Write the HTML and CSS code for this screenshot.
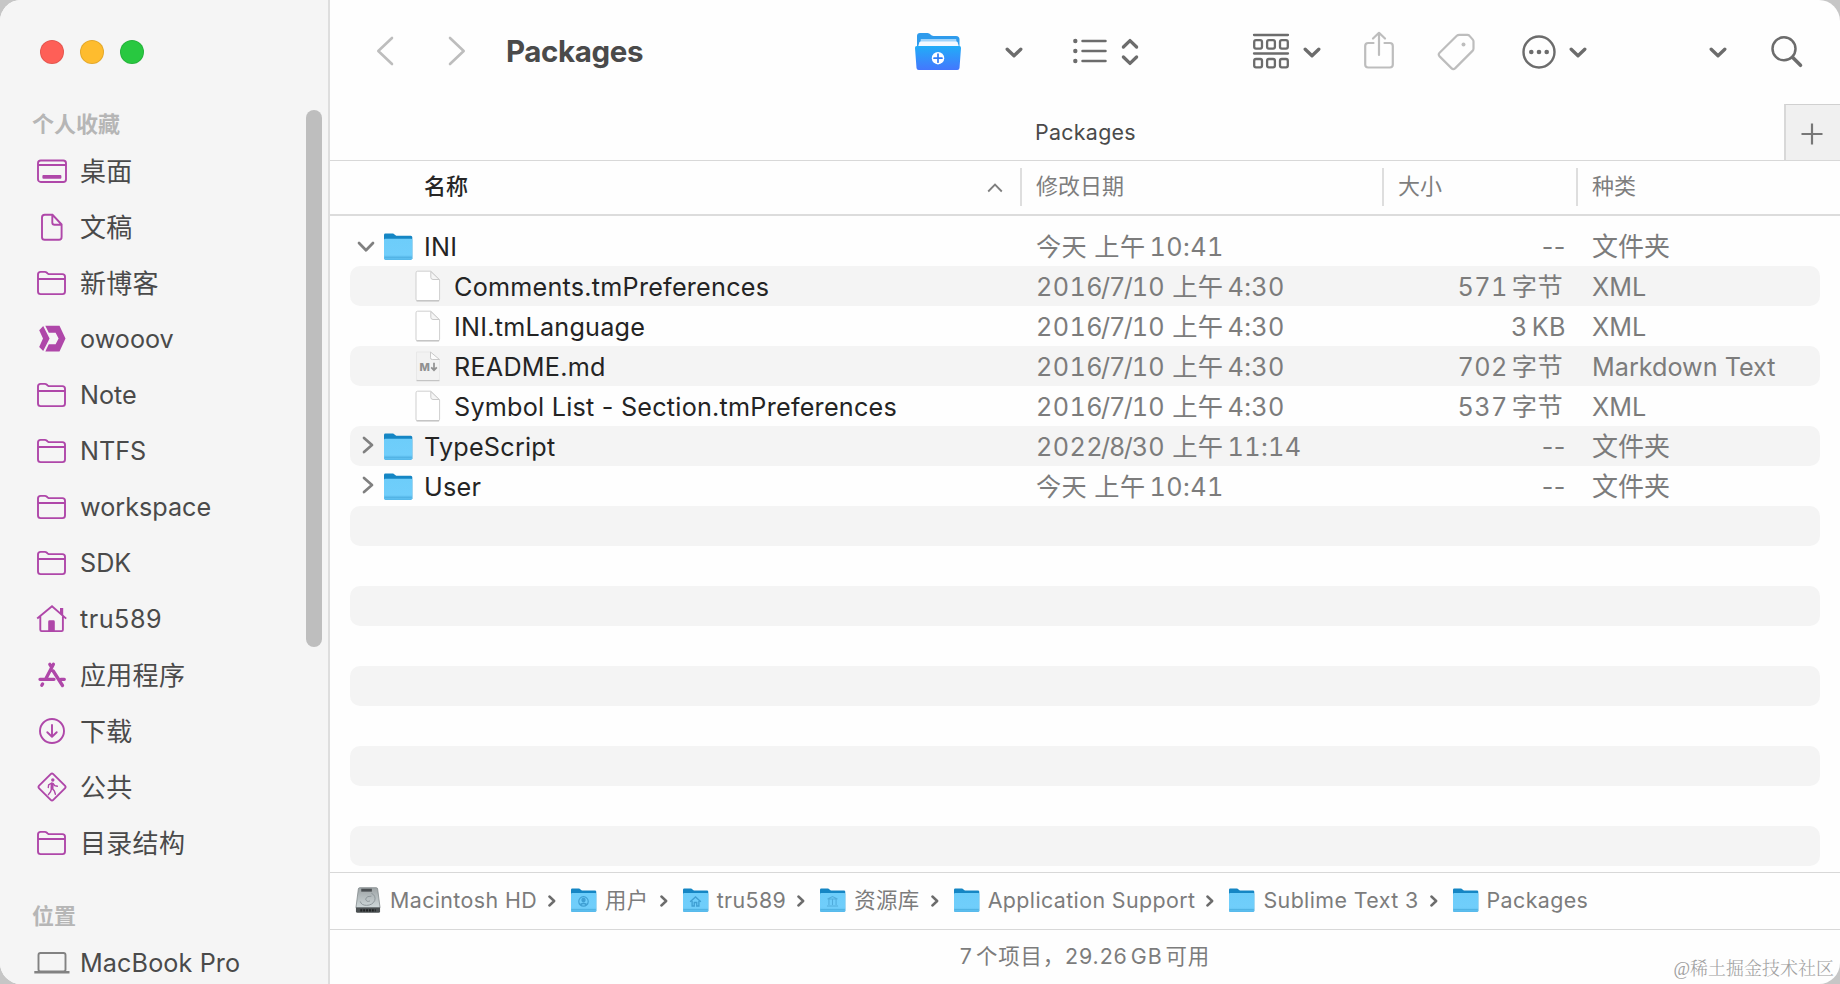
FILE: index.html
```
<!DOCTYPE html>
<html lang="zh-CN">
<head>
    <meta charset="UTF-8">
    <meta name="viewport" content="width=device-width, initial-scale=1.0">
    <title>Packages</title>
    <link rel="stylesheet" href="styles.css">
</head>
<body>
    <svg class="sprite" aria-hidden="true">
        <defs>
            <linearGradient id="front" x1="0" y1="0" x2="0" y2="1">
                <stop offset="0" stop-color="#6dcdfa"/>
                <stop offset="0.75" stop-color="#70cefb"/>
                <stop offset="1" stop-color="#55b8ea"/>
            </linearGradient>
            <linearGradient id="disk" x1="0" y1="0" x2="0" y2="1">
                <stop offset="0" stop-color="#9da3a5"/>
                <stop offset="1" stop-color="#cfd8da"/>
            </linearGradient>
            <linearGradient id="plusfolder" x1="0" y1="0" x2="0" y2="1">
                <stop offset="0" stop-color="#21adf8"/>
                <stop offset="1" stop-color="#4477fd"/>
            </linearGradient>
        </defs>
        <symbol id="i-folder" viewBox="0 0 36 30">
            <path d="M4 23.5V6.5q0-2.600 2.600-2.600h4.200q1.200 0 2.100.8l.8.700q.9.700 2.100.7H28.400q2.600 0 2.600 2.600v14.800q0 2.600-2.600 2.600H6.600Q4 26.100 4 23.500zM4 11h27"/>
        </symbol>
        <symbol id="i-desktop" viewBox="0 0 36 30">
            <rect x="4" y="4.500" width="28" height="21.500" rx="2.800"/>
            <path d="M4 9h28"/>
            <rect x="8.400" y="18.900" width="19" height="3.800" rx="1" fill="currentColor" stroke="none"/>
        </symbol>
        <symbol id="i-doc" viewBox="0 0 36 30">
            <path d="M18.500 2.800H10.800Q8 2.800 8 5.600v19.600Q8 27.800 10.800 27.800h14.200q2.600 0 2.600-2.800V12.500zM18.300 3v7.500q0 2.300 2.300 2.300h7"/>
        </symbol>
        <symbol id="i-owo" viewBox="0 0 36 30">
            <path fill="currentColor" stroke="none" d="M11.300 1.700h14.200L31.500 14.500l-6 12.900H11.300l3.500-7.200h6.800l3-5.700-3-5.700h-6.800z"/>
            <path fill="currentColor" stroke="none" d="M9.200 2 15.600 14.500 9.200 27.100 5.200 22.900 9 14.500 5.200 6.300z"/>
        </symbol>
        <symbol id="i-home" viewBox="0 0 36 30">
            <path d="M3.200 14.600 18 2.200l14.200 12.400M6.300 12.500v13.300q0 1.300 1.300 1.300h20q1.300 0 1.300-1.300V12.500"/>
            <path fill="currentColor" stroke="none" d="M26 4h3.200v8.300L26 9.500zM14.200 27V17.700q0-1.400 1.400-1.400h3.800q1.400 0 1.400 1.400V27z"/>
        </symbol>
        <symbol id="i-apps" viewBox="0 0 36 30">
            <path stroke-width="3.300" stroke-linecap="round" d="M15.800 4.300l1.500 2.300M19.400 4.300 12 18.500M19.200 11 28.500 25.500M8.600 23.900l-.8 1.400M6 19.300h14M26.800 19.300h3.500"/>
        </symbol>
        <symbol id="i-down" viewBox="0 0 36 30">
            <circle cx="18" cy="15" r="12"/>
            <path stroke-linecap="round" stroke-linejoin="round" d="M18 9v11.500M13.300 16.200l4.700 4.500 4.700-4.500"/>
        </symbol>
        <symbol id="i-walk" viewBox="0 0 36 30">
            <path stroke-linejoin="round" d="M16.700 2.100 5.100 13.700q-1.300 1.300 0 2.600L16.700 27.900q1.300 1.300 2.600 0L30.900 16.300q1.300-1.300 0-2.600L19.300 2.100q-1.300-1.300-2.600 0z"/>
            <circle cx="18.800" cy="8" r="1.700" fill="currentColor" stroke="none"/>
            <path stroke-width="3" stroke-linecap="round" d="M18.200 12l-.2 4"/>
            <path stroke-width="1.400" stroke-linecap="round" d="M17.600 11.200l-3 1.800-.3 2.500M19 11.500l1.800 2.200 2.600.5M17.600 16.500l-1 3.200-2.200 3M18.400 16.500l2 2.600 1 3.200"/>
        </symbol>
        <symbol id="i-laptop" viewBox="0 0 36 30">
            <rect x="4.500" y="5" width="27" height="18.500" rx="2"/>
            <path d="M.3 24.300h35.200" stroke-width="2.600"/>
        </symbol>
        <symbol id="chev-down" viewBox="0 0 18 12">
            <path d="M2.200 2.200 9 8.800l6.800-6.600" fill="none" stroke="currentColor" stroke-width="3.300" stroke-linecap="round" stroke-linejoin="round"/>
        </symbol>
        <symbol id="chev-open" viewBox="0 0 18 12">
            <path d="M2 2 9 9.300 16 2" fill="none" stroke="currentColor" stroke-width="2.700" stroke-linecap="round" stroke-linejoin="round"/>
        </symbol>
        <symbol id="chev-closed" viewBox="0 0 12 18">
            <path d="M2 2l8 7-8 7" fill="none" stroke="currentColor" stroke-width="2.700" stroke-linecap="round" stroke-linejoin="round"/>
        </symbol>
        <symbol id="chev-path" viewBox="0 0 8 12">
            <path d="M1.400 1.500 6.200 6l-4.800 4.500" fill="none" stroke="currentColor" stroke-width="2.400" stroke-linecap="round" stroke-linejoin="round"/>
        </symbol>
        <symbol id="folder" viewBox="0 0 30 28">
            <path fill="#1586c4" d="M1 26V2q0-1.400 1.400-1.400h7.800l3 2.200h14.600q1.500 0 1.500 1.500V26z"/>
            <path fill="url(#front)" d="M1 7q0-1.300 1.300-1.300H28q1.300 0 1.300 1.300v18.500q0 1.400-1.400 1.400H2.400Q1 26.900 1 25.500z"/>
            <path stroke="#4dafe0" stroke-width="1" d="M1.500 24.200h27.300"/>
        </symbol>
        <symbol id="file" viewBox="0 0 26 32">
            <path d="M1 2.800Q1 1.200 2.600 1.200h13.200L24.600 10v19.200q0 1.500-1.500 1.500H2.500q-1.500 0-1.500-1.500z" fill="#fff" stroke="#cfcfcf"/>
            <path d="M1.500 30.900h22.600" stroke="#b8b8b8"/>
            <path d="M15.800 1.500v5.800q0 2.200 2.200 2.200h6.300z" fill="#f5f5f5" stroke="#cacaca"/>
        </symbol>
    </svg>

    <div class="window">
        <aside class="sidebar">
            <div class="lights">
                <span class="light red"></span>
                <span class="light yellow"></span>
                <span class="light green"></span>
            </div>
            <h2 class="group">个人收藏</h2>
            <ul class="places">
                <li class="cjk"><svg><use href="#i-desktop"/></svg>桌面</li>
                <li class="cjk"><svg><use href="#i-doc"/></svg>文稿</li>
                <li class="cjk"><svg><use href="#i-folder"/></svg>新博客</li>
                <li><svg><use href="#i-owo"/></svg>owooov</li>
                <li><svg><use href="#i-folder"/></svg>Note</li>
                <li><svg><use href="#i-folder"/></svg>NTFS</li>
                <li><svg><use href="#i-folder"/></svg>workspace</li>
                <li><svg><use href="#i-folder"/></svg>SDK</li>
                <li class="digits"><svg><use href="#i-home"/></svg>tru589</li>
                <li class="cjk"><svg><use href="#i-apps"/></svg>应用程序</li>
                <li class="cjk"><svg><use href="#i-down"/></svg>下载</li>
                <li class="cjk"><svg><use href="#i-walk"/></svg>公共</li>
                <li class="cjk"><svg><use href="#i-folder"/></svg>目录结构</li>
            </ul>
            <h2 class="group second">位置</h2>
            <ul class="places devices">
                <li><svg><use href="#i-laptop"/></svg>MacBook Pro</li>
            </ul>
            <div class="scrollbar"></div>
        </aside>

        <main class="content">
            <header class="toolbar">
                <svg class="nav-back" width="18" height="30" viewBox="0 0 18 30"><path d="M16 2 2.300 15 16 28"/></svg>
                <svg class="nav-next" width="18" height="30" viewBox="0 0 18 30"><path d="M2 2l13.700 13L2 28"/></svg>
                <h1 class="title">Packages</h1>
                <svg class="new-folder" width="48" height="38" viewBox="0 0 48 38">
                    <path fill="#2e9bec" d="M3 16V3q0-3 3-3h7.500q2 0 3 1.600Q17.500 3 19.500 3H42q3.500 0 3.500 3.500V16z"/>
                    <path fill="#9fd4fb" d="M6 14l.8-8h35.400l.8 8z"/>
                    <path fill="#f3f9ff" d="M4 14l1.300-4.500q.4-1 1.500-1h35.500q1 0 1.400 1L45 14z"/>
                    <path fill="url(#plusfolder)" d="M1 15q-.2-2 1.800-2h42.400q2 0 1.800 2l-1.500 20q-.2 2-2.200 2H4.700q-2 0-2.200-2z"/>
                    <circle cx="24" cy="25.200" r="6.200" fill="#fff"/>
                    <path d="M24 21.200v8M20 25.200h8" stroke="#327cf5" stroke-width="1.700"/>
                </svg>
                <svg class="chev c1"><use href="#chev-down"/></svg>
                <svg class="view-list" width="34" height="26" viewBox="0 0 34 26">
                    <g fill="#6c6c6c"><circle cx="2.300" cy="3" r="2.200"/><circle cx="2.300" cy="13" r="2.200"/><circle cx="2.300" cy="23" r="2.200"/></g>
                    <path d="M9.500 3h23M9.500 13h23M9.500 23h23" stroke="#6c6c6c" stroke-width="2.500" stroke-linecap="round"/>
                </svg>
                <svg class="updown" width="18" height="28" viewBox="0 0 18 28"><path d="M2.400 9 9 2.600 15.600 9M2.400 19 9 25.400 15.600 19"/></svg>
                <svg class="group-by" width="38" height="36" viewBox="0 0 38 36">
                    <g fill="none" stroke="#6c6c6c" stroke-width="2.300">
                        <path d="M2 2h34M2 20.500h34"/>
                        <rect x="2.200" y="7.200" width="7.800" height="8.400" rx="1.800"/><rect x="15.100" y="7.200" width="7.800" height="8.400" rx="1.800"/><rect x="28" y="7.200" width="7.800" height="8.400" rx="1.800"/>
                        <rect x="2.200" y="26" width="7.800" height="8.400" rx="1.800"/><rect x="15.100" y="26" width="7.800" height="8.400" rx="1.800"/><rect x="28" y="26" width="7.800" height="8.400" rx="1.800"/>
                    </g>
                </svg>
                <svg class="chev c2"><use href="#chev-down"/></svg>
                <svg class="share" width="32" height="38" viewBox="0 0 32 38">
                    <path d="M10.500 12H5.200q-3 0-3 3v18.500q0 3 3 3h21.600q3 0 3-3V15q0-3-3-3h-5.300M16 24V2M10 7.500 16 1.800l6 5.700"/>
                </svg>
                <svg class="tag" width="38" height="38" viewBox="0 0 38 38">
                    <path d="M2.600 19.800 19.800 2.800q1-1 2.500-1H30.500q1 0 1.800.8l3.500 4q.7.800.7 1.900v7q0 1.400-1 2.400L18.300 35.100q-2 1.900-3.900 0L2.600 23.400q-1.700-1.800 0-3.600z"/>
                    <circle cx="26.500" cy="11.500" r="2" fill="#bdbdbd" stroke="none"/>
                </svg>
                <svg class="more" width="36" height="36" viewBox="0 0 36 36">
                    <circle cx="18" cy="18" r="15.500" fill="none" stroke="#6c6c6c" stroke-width="2.400"/>
                    <g fill="#6c6c6c"><circle cx="10.300" cy="18" r="2.300"/><circle cx="18" cy="18" r="2.300"/><circle cx="25.700" cy="18" r="2.300"/></g>
                </svg>
                <svg class="chev c3"><use href="#chev-down"/></svg>
                <svg class="chev c4"><use href="#chev-down"/></svg>
                <svg class="search" width="34" height="34" viewBox="0 0 34 34">
                    <circle cx="14" cy="13.800" r="11.500" stroke-width="2.500"/>
                    <path d="M22.500 22.300 30.500 30.300" stroke-width="3.600"/>
                </svg>
            </header>

            <div class="tabs">
                <div class="tab">Packages</div>
                <div class="tab-add"><svg width="22" height="22" viewBox="0 0 22 22"><path d="M11 .5v21M.5 11h21"/></svg></div>
            </div>

            <div class="columns">
                <div class="col-name">名称<svg width="16" height="10" viewBox="0 0 16 10"><path d="M1.200 8.500 8 1.500l6.800 7"/></svg></div>
                <div>修改日期</div>
                <div>大小</div>
                <div>种类</div>
            </div>

            <div class="rows">
                <div class="row">
                    <div class="name"><svg class="open"><use href="#chev-open"/></svg><svg class="folder"><use href="#folder"/></svg>INI</div>
                    <div class="date">今天 上午<i></i>10:41</div><div class="size none">--</div><div class="kind cjk">文件夹</div>
                </div>
                <div class="row">
                    <div class="name child"><svg class="file"><use href="#file"/></svg>Comments.tmPreferences</div>
                    <div class="date">2016<span>/</span>7<span>/</span>10 上午<i></i>4:30</div><div class="size unit">571<i></i>字节</div><div class="kind">XML</div>
                </div>
                <div class="row">
                    <div class="name child"><svg class="file"><use href="#file"/></svg>INI.tmLanguage</div>
                    <div class="date">2016<span>/</span>7<span>/</span>10 上午<i></i>4:30</div><div class="size">3<i></i>KB</div><div class="kind">XML</div>
                </div>
                <div class="row">
                    <div class="name child">
                        <svg class="file" viewBox="0 0 26 32">
                            <path d="M1.500 2v27q0 1.500 1.500 1.500h20q1.500 0 1.500-1.500V9.500h-7.200q-1.800 0-1.800-1.800V2z" fill="#f2f2f2" stroke="#e8e8e8"/>
                            <path d="M15.500 2v5.700q0 1.800 1.800 1.800h7.200z" fill="#fcfcfc" stroke="#c9c9c9"/>
                            <path d="M1.500 30.700h23" stroke="#bcbcbc"/>
                            <text x="4.500" y="21" class="md">M</text>
                            <path d="M19 12.800v7M16.200 17.300l2.800 2.900 2.800-2.900" fill="none" stroke="#909090" stroke-width="1.700"/>
                        </svg>README.md</div>
                    <div class="date">2016<span>/</span>7<span>/</span>10 上午<i></i>4:30</div><div class="size unit">702<i></i>字节</div><div class="kind">Markdown Text</div>
                </div>
                <div class="row">
                    <div class="name child"><svg class="file"><use href="#file"/></svg>Symbol List - Section.tmPreferences</div>
                    <div class="date">2016<span>/</span>7<span>/</span>10 上午<i></i>4:30</div><div class="size unit">537<i></i>字节</div><div class="kind">XML</div>
                </div>
                <div class="row">
                    <div class="name"><svg class="closed"><use href="#chev-closed"/></svg><svg class="folder"><use href="#folder"/></svg>TypeScript</div>
                    <div class="date">2022<span>/</span>8<span>/</span>30 上午<i></i>11:14</div><div class="size none">--</div><div class="kind cjk">文件夹</div>
                </div>
                <div class="row">
                    <div class="name"><svg class="closed"><use href="#chev-closed"/></svg><svg class="folder"><use href="#folder"/></svg>User</div>
                    <div class="date">今天 上午<i></i>10:41</div><div class="size none">--</div><div class="kind cjk">文件夹</div>
                </div>
                <div class="row"></div>
                <div class="row"></div>
                <div class="row"></div>
                <div class="row"></div>
                <div class="row"></div>
                <div class="row"></div>
                <div class="row"></div>
                <div class="row"></div>
                <div class="row"></div>
            </div>

            <nav class="path">
                <svg class="hd" viewBox="0 0 26 28">
                    <path d="M3 2q.2-1.300 1.500-1.300h17Q22.800.7 23 2l2.500 19.500H.5z" fill="url(#disk)" stroke="#80878a" stroke-width=".8"/>
                    <path d="M.5 21.300h25v3.900q0 1.600-1.600 1.600H2.100Q.5 26.800.5 25.200z" fill="#4b5052"/>
                    <path d="M5 24.200h16" stroke="#1e2122" stroke-width="2.400" stroke-dasharray="2 1"/>
                    <path d="M6 3.300h11" stroke="#4a4f52" stroke-width="3"/>
                    <path d="M16.500 6.500q5 2.500 3.500 7.500-2.500 5-8.500 5-5.500 0-6.500-4M16.500 9.500q-5-.5-6 3 1 3.500 4.500 2" fill="none" stroke="#8b9498" stroke-width="1"/>
                </svg>
                <span>Macintosh HD</span><svg class="sep"><use href="#chev-path"/></svg>
                <svg class="pf" viewBox="0 0 30 28"><use href="#folder"/><g fill="none" stroke="#3f9fd3" stroke-width="1.300"><circle cx="15" cy="15" r="5.300"/><circle cx="15" cy="13.500" r="1.800" fill="#3f9fd3"/><path d="M11.500 18.800q3.500-3 7 0" stroke-width="2"/></g></svg>
                <span class="cjk">用户</span><svg class="sep"><use href="#chev-path"/></svg>
                <svg class="pf" viewBox="0 0 30 28"><use href="#folder"/><path d="M9 15.500 15 10l6 5.500M11.200 14.500v5.700h2.400v-4h2.800v4h2.400v-5.700" fill="none" stroke="#3f9fd3" stroke-width="1.500"/></svg>
                <span>tru589</span><svg class="sep"><use href="#chev-path"/></svg>
                <svg class="pf" viewBox="0 0 30 28"><use href="#folder"/><path d="M9.500 12.300 15 9.500l5.500 2.800zM11 13v6M15 13v6M19 13v6M8.800 20.200h12.400" fill="none" stroke="#50acdc" stroke-width="1.200"/></svg>
                <span class="cjk">资源库</span><svg class="sep"><use href="#chev-path"/></svg>
                <svg class="pf"><use href="#folder"/></svg>
                <span>Application Support</span><svg class="sep"><use href="#chev-path"/></svg>
                <svg class="pf"><use href="#folder"/></svg>
                <span>Sublime Text 3</span><svg class="sep"><use href="#chev-path"/></svg>
                <svg class="pf"><use href="#folder"/></svg>
                <span>Packages</span>
            </nav>

            <footer class="status">7<i></i>个项目，29.26<i></i>GB<i></i>可用</footer>
        </main>
        <div class="watermark">@稀土掘金技术社区</div>
    </div>
</body>
</html>
```
FILE: styles.css
```
* {
    box-sizing: border-box;
}
body {
    margin: 0;
    background-color: #c6c6c6;
    font-family: Inter, "Noto Sans CJK SC", sans-serif;
    color: #4a4a4a;
}
svg {
    flex: none;
    display: block;
}
h1, h2, ul {
    margin: 0;
    padding: 0;
    list-style: none;
}
.sprite {
    position: absolute;
    width: 0;
    height: 0;
}
.window {
    position: relative;
    display: flex;
    width: 1840px;
    height: 984px;
    border-radius: 21px;
    overflow: hidden;
    background-color: #fefefe;
}

/* Sidebar */
.sidebar {
    position: relative;
    flex: none;
    width: 330px;
    height: 984px;
    overflow: hidden;
    background-color: #f5f5f5;
    border-right: 2px solid #dedede;
}
.lights {
    display: flex;
    gap: 16px;
    height: 105px;
    padding: 40px 0 0 40px;
}
.light {
    width: 24px;
    height: 24px;
    border-radius: 50%;
    border: 1px solid rgba(0, 0, 0, 0.1);
}
.red { background-color: #fe5f57; }
.yellow { background-color: #febc2e; }
.green { background-color: #28c840; }
.group {
    height: 38px;
    line-height: 38px;
    padding-left: 32px;
    font-size: 22px;
    font-weight: 700;
    color: #b6b6b6;
}
.group.second {
    margin-top: 26px;
}
.places li {
    display: flex;
    align-items: center;
    gap: 10px;
    height: 56px;
    padding-left: 34px;
    font-size: 25.2px;
    white-space: nowrap;
}
.places li.digits {
    letter-spacing: 0.5px;
}
/* CJK glyphs sit lower in their line box than latin ones */
.places li.cjk {
    padding-bottom: 4px;
    font-size: 26px;
    letter-spacing: 0.3px;
}
.places svg {
    width: 36px;
    height: 30px;
    color: #af47a9;
    fill: none;
    stroke: currentColor;
    stroke-width: 1.9;
}
.places .cjk svg {
    margin-top: 3px;
}
.places.devices li {
    letter-spacing: 0.1px;
}
.places.devices svg {
    color: #828282;
}
.scrollbar {
    position: absolute;
    right: 6px;
    top: 110px;
    width: 16px;
    height: 537px;
    border-radius: 8px;
    background-color: #bebebe;
}

/* Toolbar */
.content {
    flex: 1;
    display: flex;
    flex-direction: column;
    min-width: 0;
}
.toolbar {
    display: flex;
    align-items: center;
    height: 104px;
    padding-left: 46px;
}
.toolbar svg {
    stroke-linecap: round;
    stroke-linejoin: round;
}
.nav-back, .nav-next, .updown, .share, .tag, .search {
    fill: none;
    stroke: #bdbdbd;
    stroke-width: 2.6;
}
.nav-back, .nav-next {
    margin-top: -2px;
}
.updown, .search {
    stroke: #6c6c6c;
}
.updown {
    stroke-width: 3.3;
    margin-left: 14px;
}
.nav-next {
    margin-left: 54px;
}
.title {
    width: 408px;
    margin: -2px 0 0 40px;
    font-size: 29.5px;
    font-weight: 700;
    letter-spacing: -0.4px;
}
.chev {
    width: 18px;
    height: 12px;
    color: #6c6c6c;
    margin-top: 1px;
}
.c1 { margin-left: 43px; }
.c2 { margin-left: 13px; }
.c3 { margin-left: 12px; }
.c4 { margin-left: 122px; }
.view-list { margin-left: 50px; margin-top: -2px; }
.group-by { margin-left: 113px; margin-top: -2px; }
.share { margin-left: 42px; margin-top: -5px; stroke-width: 2.2; }
.tag { margin-left: 42px; stroke-width: 2.2; }
.more { margin-left: 46px; margin-top: -1px; }
.search { margin-left: 43px; }

/* Tabs */
.tabs {
    display: flex;
    height: 57px;
    border-bottom: 1px solid #d8d8d8;
}
.tab {
    flex: 1;
    padding-left: 57px;
    line-height: 57px;
    text-align: center;
    font-size: 21.4px;
    letter-spacing: 0.3px;
}
.tab-add {
    display: flex;
    align-items: center;
    justify-content: center;
    width: 56px;
    padding: 2px 2px 0 0;
    background-color: #f0f0f0;
    border-left: 2px solid #d8d8d8;
    border-top: 1px solid #d0d0d0;
}
.tab-add path {
    stroke: #777;
    stroke-width: 2.2;
}

/* File list */
.columns, .row {
    display: grid;
    grid-template-columns: 670px 362px 194px 1fr;
    align-items: center;
}
.columns {
    height: 55px;
    padding: 7px 0 9px 20px;
    border-bottom: 2px solid #dcdcdc;
    font-size: 22px;
    color: #7e7e7e;
}
.columns > div {
    height: 38px;
    line-height: 36px;
    padding-left: 14px;
    border-left: 2px solid #dedede;
}
.columns .col-name {
    display: flex;
    justify-content: space-between;
    align-items: center;
    padding: 0 17px 2px 74px;
    border-left: 0;
    color: #262626;
    font-weight: 500;
}
.col-name svg {
    margin-top: 4px;
    fill: none;
    stroke: #7e7e7e;
    stroke-width: 1.8;
}
.rows {
    padding: 10px 20px 6px;
}
.row {
    height: 40px;
    border-radius: 10px;
    font-size: 25.2px;
    line-height: 42px;
    white-space: nowrap;
    color: #7c7c7c;
}
.row:nth-child(even) {
    background-color: #f4f4f4;
}
.name {
    display: flex;
    align-items: center;
    height: 42px;
    padding-left: 7px;
    letter-spacing: 0.23px;
    color: #242424;
}
.name.child {
    padding-left: 65px;
}
.open {
    width: 18px;
    height: 12px;
    margin-right: 8px;
    color: #808080;
}
.closed {
    width: 12px;
    height: 18px;
    margin: 0 9px 4px 5px;
    color: #808080;
}
.folder {
    width: 30px;
    height: 28px;
    margin-right: 11px;
}
.file {
    width: 26px;
    height: 32px;
    margin: 0 13px 2px 0;
}
.md {
    font-size: 11px;
    font-weight: 800;
    letter-spacing: 0;
    fill: #909090;
}
.date, .kind {
    padding-left: 16px;
}
.date, .size {
    letter-spacing: 0.4px;
    font-variant-numeric: tabular-nums;
}
/* keep the slashes narrow next to tabular digits */
.date span {
    margin: 0 -1.5px 0 -2px;
}
.kind.cjk {
    font-size: 26px;
}
.size {
    text-align: right;
    padding-right: 10px;
}
.size.unit {
    padding-right: 13px;
}
.size.none {
    font-variant-numeric: normal;
    letter-spacing: 0.6px;
}
/* thin gap between digits and units */
i {
    display: inline-block;
    width: 4px;
}

/* Path bar and status bar */
.path {
    display: flex;
    align-items: center;
    height: 58px;
    padding-left: 25px;
    border-top: 1px solid #d8d8d8;
    border-bottom: 1px solid #d8d8d8;
    font-size: 21.4px;
    letter-spacing: 0.4px;
    color: #7c7c7c;
    white-space: nowrap;
}
.path span {
    margin-top: -2px;
}
.path span.cjk {
    margin-top: -5px;
}
.hd {
    width: 26px;
    height: 27px;
    margin: 0 9px 2px 0;
}
.pf {
    width: 27px;
    height: 25px;
    margin: 0 8px 1px 0;
}
.sep {
    width: 8px;
    height: 12px;
    margin: 0 14px 0 11px;
    color: #6c6c6c;
}
.status {
    height: 54px;
    line-height: 52px;
    text-align: center;
    font-size: 21.4px;
    letter-spacing: 0.9px;
    color: #7c7c7c;
}
.status i {
    width: 3px;
}
.watermark {
    position: absolute;
    right: 6px;
    bottom: 4px;
    font-family: "Liberation Serif", "Noto Serif CJK SC", "Noto Sans CJK SC", serif;
    font-size: 18px;
    font-weight: 300;
    color: #a0a0a0;
}
```
